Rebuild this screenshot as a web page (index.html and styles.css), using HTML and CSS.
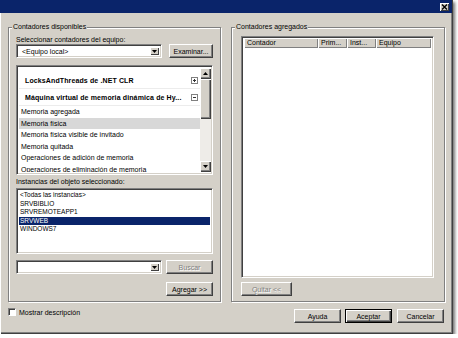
FILE: index.html
```
<!DOCTYPE html>
<html lang="es">
<head>
<meta charset="utf-8">
<title>Agregar contadores</title>
<link rel="stylesheet" href="styles.css">
</head>
<body>
<div class="window">
  <div class="titlebar">
    <span class="close"><svg width="7" height="6" viewBox="0 0 7 6"><path d="M1 0.5 L6 5.5 M6 0.5 L1 5.5" stroke="#000" stroke-width="1.4"/></svg></span>
  </div>
  <div class="content">
    <div class="groups">
      <fieldset class="group left">
        <legend>Contadores disponibles</legend>
        <div class="label first">Seleccionar contadores del equipo:</div>
        <div class="combo-row top">
          <div class="combo wide"><span class="combo-text">&lt;Equipo local&gt;</span><span class="drop"><svg width="5" height="3" viewBox="0 0 5 3"><path d="M0 0H5L2.5 3Z" fill="#000"/></svg></span></div>
          <button class="btn examinar">Examinar...</button>
        </div>
        <div class="tree sunken">
          <div class="tree-items">
            <div class="cat"><span>LocksAndThreads de .NET CLR</span><svg class="pm" width="7" height="7" viewBox="0 0 7 7"><rect x="0.5" y="0.5" width="6" height="6" fill="#fff" stroke="#808080"/><path d="M2 3.5H5M3.5 2V5" stroke="#333"/></svg></div>
            <div class="cat"><span>Máquina virtual de memoria dinámica de Hy...</span><svg class="pm" width="7" height="7" viewBox="0 0 7 7"><rect x="0.5" y="0.5" width="6" height="6" fill="#fff" stroke="#808080"/><path d="M2 3.5H5" stroke="#333"/></svg></div>
            <div class="item">Memoria agregada</div>
            <div class="item sel">Memoria física</div>
            <div class="item">Memoria física visible de invitado</div>
            <div class="item">Memoria quitada</div>
            <div class="item">Operaciones de adición de memoria</div>
            <div class="item">Operaciones de eliminación de memoria</div>
          </div>
          <div class="scrollbar">
            <span class="sbtn"><svg width="5" height="3" viewBox="0 0 5 3"><path d="M0 3H5L2.5 0Z" fill="#000"/></svg></span>
            <span class="thumb"></span>
            <span class="track"></span>
            <span class="sbtn"><svg width="5" height="3" viewBox="0 0 5 3"><path d="M0 0H5L2.5 3Z" fill="#000"/></svg></span>
          </div>
        </div>
        <div class="label second">Instancias del objeto seleccionado:</div>
        <div class="instances sunken">
          <div class="inst">&lt;Todas las instancias&gt;</div>
          <div class="inst">SRVBIBLIO</div>
          <div class="inst">SRVREMOTEAPP1</div>
          <div class="inst selected">SRVWEB</div>
          <div class="inst">WINDOWS7</div>
        </div>
        <div class="combo-row bottom">
          <div class="combo wide2"><span class="combo-text"></span><span class="drop"><svg width="5" height="3" viewBox="0 0 5 3"><path d="M0 0H5L2.5 3Z" fill="#000"/></svg></span></div>
          <button class="btn disabled buscar">Buscar</button>
        </div>
        <div class="add-row">
          <button class="btn agregar">Agregar &gt;&gt;</button>
        </div>
      </fieldset>
      <fieldset class="group right">
        <legend>Contadores agregados</legend>
        <div class="listview sunken">
          <div class="lv-header">
            <span class="col c1">Contador</span>
            <span class="col c2">Prim...</span>
            <span class="col c3">Inst...</span>
            <span class="col c4">Equipo</span>
          </div>
          <div class="lv-body"></div>
        </div>
        <div class="quitar-row">
          <button class="btn disabled quitar">Quitar &lt;&lt;</button>
        </div>
      </fieldset>
    </div>
    <div class="footer">
      <label class="check"><span class="box"></span><span>Mostrar descripción</span></label>
      <div class="actions">
        <button class="btn">Ayuda</button>
        <button class="btn default">Aceptar</button>
        <button class="btn">Cancelar</button>
      </div>
    </div>
  </div>
</div>
</body>
</html>
```
FILE: styles.css
```
* { box-sizing: border-box; }
html, body { margin: 0; padding: 0; }
body {
  background: #fff;
  font-family: "Liberation Sans", Arial, sans-serif;
  font-size: 7px;
  color: #000;
}
.window {
  width: 453px;
  height: 334px;
  background: #d4d0c8;
  display: flex;
  flex-direction: column;
  box-shadow: inset 1px 0 #fff, inset -1px -1px #404040, inset -2px -2px #808080, 2px 2px 3px rgba(0,0,0,0.55);
}
.titlebar {
  height: 13px;
  margin-right: 1px;
  background: #0a246a;
  display: flex;
  justify-content: flex-end;
  align-items: flex-start;
  padding: 3px 3px 0 0;
}
.close {
  width: 9px;
  height: 8px;
  background: #d4d0c8;
  display: flex;
  align-items: center;
  justify-content: center;
  box-shadow: inset 1px 1px #fff, inset -1px -1px #404040;
}
.content {
  flex: 1;
  display: flex;
  flex-direction: column;
  padding: 10px 8px 0 8px;
}
.groups {
  display: flex;
  gap: 10px;
  height: 279px;
}
.group {
  margin: 0;
  min-width: 0;
  border: 1px solid #808080;
  box-shadow: inset 1px 1px #fff, 1px 1px #fff;
  display: flex;
  flex-direction: column;
}
.group legend {
  line-height: 8px;
  padding: 0 1px;
  background: #d4d0c8;
}
.left { width: 213px; padding: 0 7px 5px 7px; }
.left legend { margin-left: -4px; }
.right { width: 214px; padding: 0 10px 5px 9px; }
.right legend { margin-left: -6px; }
.label { line-height: 8px; height: 8px; white-space: nowrap; }
.label.first { margin-top: 5px; }
.label.second { margin-top: 3px; }

.sunken {
  background: #fff;
  border: 1px solid;
  border-color: #808080 #fff #fff #808080;
  box-shadow: inset 1px 1px #404040, inset -1px -1px #d4d0c8;
}
.btn {
  height: 14px;
  margin: 0;
  padding: 0;
  font: inherit;
  color: #000;
  background: #d4d0c8;
  border: 1px solid;
  border-color: #fff #404040 #404040 #fff;
  box-shadow: inset -1px -1px #808080;
  line-height: 11px;
  text-align: center;
}
.btn.disabled { color: #808080; text-shadow: 1px 1px #fff; }
.btn.default {
  border: 1px solid #000;
  box-shadow: inset 1px 1px #fff, inset -1px -1px #404040, inset -2px -2px #808080;
}
.combo-row { display: flex; height: 14px; }
.combo-row.top { margin-top: 0; gap: 7px; }
.combo-row.bottom { margin-top: 6px; gap: 4px; }
.combo {
  height: 14px;
  background: #fff;
  border: 1px solid;
  border-color: #808080 #fff #fff #808080;
  box-shadow: inset 1px 1px #404040, inset -1px -1px #d4d0c8;
  display: flex;
  align-items: stretch;
  padding: 2px;
}
.combo.wide { width: 146px; }
.combo.wide2 { width: 146px; }
.combo-text { flex: 1; line-height: 10px; padding-left: 3px; white-space: nowrap; }
.drop {
  width: 9px;
  background: #d4d0c8;
  display: flex;
  align-items: center;
  justify-content: center;
  box-shadow: inset 1px 1px #fff, inset -1px -1px #404040;
}
.examinar { width: 44px; }
.buscar { width: 47px; }

.tree {
  margin-top: 7px;
  height: 110px;
  display: flex;
  padding: 2px 1px 2px 2px;
}
.tree-items { flex: 1; overflow: hidden; padding-top: 4px; min-width: 0; }
.cat {
  height: 17px;
  display: flex;
  align-items: center;
  justify-content: space-between;
  padding: 0 2px 0 6px;
  font-weight: bold;
  letter-spacing: 0.12px;
  white-space: nowrap;
  border-bottom: 1px solid #ececec;
}
.pm { flex: none; }
.item {
  height: 11.6px;
  line-height: 11.6px;
  padding-left: 2px;
  white-space: nowrap;
}
.item.sel { background: #d8d8d8; }
.scrollbar {
  width: 11px;
  display: flex;
  flex-direction: column;
  background: #eeece8;
}
.sbtn {
  height: 11px;
  flex: none;
  background: #d4d0c8;
  display: flex;
  align-items: center;
  justify-content: center;
  box-shadow: inset 1px 1px #fff, inset -1px -1px #404040, inset -2px -2px #808080;
}
.thumb {
  height: 40px;
  flex: none;
  background: #d4d0c8;
  box-shadow: inset 1px 1px #fff, inset -1px -1px #404040, inset -2px -2px #808080;
}
.track { flex: 1; }

.instances {
  margin-top: 2px;
  height: 66px;
  padding: 2px;
}
.inst {
  height: 8.5px;
  line-height: 8.5px;
  font-size: 6.5px;
  padding-left: 1px;
  white-space: nowrap;
}
.inst.selected { background: #0a246a; color: #fff; }
.add-row { margin-top: 8px; display: flex; justify-content: flex-end; }
.agregar { width: 47px; }

.listview {
  margin-top: 5px;
  height: 243px;
  padding: 1px 2px 2px 2px;
  display: flex;
  flex-direction: column;
}
.lv-header { display: flex; height: 10px; background: #d4d0c8; flex: none; }
.col {
  line-height: 10px;
  padding-left: 3px;
  white-space: nowrap;
  overflow: hidden;
  box-shadow: inset 1px 1px #fff, inset -1px -1px #808080;
}
.c1 { width: 74px; }
.c2 { width: 29px; }
.c3 { width: 29px; }
.c4 { flex: 1; }
.lv-body { flex: 1; background: #fff; }
.quitar-row { margin-top: 4px; display: flex; }
.quitar { width: 51px; }

.footer {
  display: flex;
  align-items: flex-start;
  padding-top: 7px;
}
.check { display: flex; align-items: center; gap: 3px; margin-top: -1px; white-space: nowrap; }
.box {
  width: 8px;
  height: 8px;
  background: #fff;
  border: 1px solid;
  border-color: #808080 #fff #fff #808080;
  box-shadow: inset 1px 1px #404040;
}
.actions { margin-left: auto; margin-right: 1px; display: flex; gap: 4px; }
.actions .btn { width: 47px; }
.actions .btn.default + .btn { margin-left: 1px; }
```
